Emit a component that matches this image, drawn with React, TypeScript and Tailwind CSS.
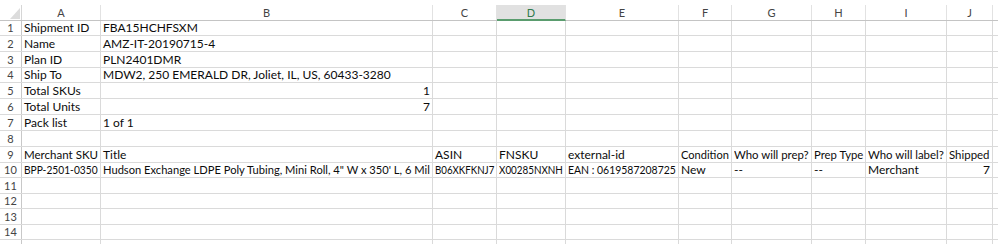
import React, { useLayoutEffect, useRef, useState } from "react";

type Cell = string | { v: string; right?: boolean };

// column widths include the 1px right grid line
const COLS = [
  { key: "A", w: 79 },
  { key: "B", w: 332 },
  { key: "C", w: 64 },
  { key: "D", w: 69 },
  { key: "E", w: 113 },
  { key: "F", w: 53 },
  { key: "G", w: 80 },
  { key: "H", w: 54 },
  { key: "I", w: 81 },
  { key: "J", w: 46 },
];

// Excel rows aren't all the same pixel height at this zoom
const ROW_H = [15, 16, 16, 15, 16, 16, 16, 16, 16, 15, 16, 15, 16, 15];

const DATA: Cell[][] = [
  ["Shipment ID", "FBA15HCHFSXM"],
  ["Name", "AMZ-IT-20190715-4"],
  ["Plan ID", "PLN2401DMR"],
  ["Ship To", "MDW2, 250 EMERALD DR, Joliet, IL, US, 60433-3280"],
  ["Total SKUs", { v: "1", right: true }],
  ["Total Units", { v: "7", right: true }],
  ["Pack list", "1 of 1"],
  [],
  [
    "Merchant SKU",
    "Title",
    "ASIN",
    "FNSKU",
    "external-id",
    "Condition",
    "Who will prep?",
    "Prep Type",
    "Who will label?",
    "Shipped",
  ],
  [
    "BPP-2501-0350",
    "Hudson Exchange LDPE Poly Tubing, Mini Roll, 4\" W x 350' L, 6 Mil",
    "B06XKFKNJ7",
    "X00285NXNH",
    "EAN : 0619587208725",
    "New",
    "--",
    "--",
    "Merchant",
    { v: "7", right: true },
  ],
];

const SELECTED_COL = "D";

// squeeze text horizontally so it never spills past the cell edge
function FitText({ text, max, right }: { text: string; max: number; right?: boolean }) {
  const ref = useRef<HTMLSpanElement>(null);
  const [scale, setScale] = useState(1);

  useLayoutEffect(() => {
    const el = ref.current;
    if (!el) return;
    const w = el.offsetWidth;
    setScale(w > max ? max / w : 1);
  }, [text, max]);

  return (
    <span
      ref={ref}
      className="inline-block"
      style={{ transform: `scaleX(${scale})`, transformOrigin: right ? "right" : "left" }}
    >
      {text}
    </span>
  );
}

function ColumnHeaders() {
  return (
    <div className="flex h-[16px] border-b border-[#c4c4c4]">
      {/* corner cell with the select-all triangle */}
      <div className="relative w-[22px] shrink-0 border-r border-[#d6d6d6]">
        <svg className="absolute left-[10px] top-[3px]" width="10" height="11" viewBox="0 0 10 11">
          <polygon points="10,0 10,11 0,11" fill="#dcdcdc" />
        </svg>
      </div>
      {COLS.map((c) => {
        const sel = c.key === SELECTED_COL;
        return (
          <div
            key={c.key}
            style={{ width: c.w }}
            className={`shrink-0 flex items-center justify-center border-r border-[#e2e2e2] text-[11px] leading-none ${
              sel
                ? "bg-[#e1e1e1] text-[#2f7a4c] border-b-2 border-b-[#5a9c6e] -mb-px"
                : "text-[#444]"
            }`}
          >
            {c.key}
          </div>
        );
      })}
      <div className="flex-1" />
    </div>
  );
}

function GridRow({ n, h, cells }: { n?: number; h: number; cells: Cell[] }) {
  return (
    <div className="flex border-b border-[#dadada]" style={{ height: h }}>
      <div className="w-[22px] shrink-0 flex items-end justify-center pb-[1px] border-r border-[#c8c8c8] text-[11px] leading-[13px] text-[#444]">
        {n}
      </div>
      {COLS.map((c, i) => {
        const cell = cells[i];
        const v = typeof cell === "string" ? cell : cell?.v ?? "";
        const right = typeof cell === "object" && cell?.right;
        return (
          <div
            key={c.key}
            style={{ width: c.w }}
            className={`shrink-0 flex items-end overflow-hidden whitespace-nowrap border-r border-[#dadada] px-[2px] pb-[1px] text-[12px] leading-[13px] text-[#0c0c0c] ${
              right ? "justify-end" : "justify-start"
            }`}
          >
            {v && <FitText text={v} max={c.w - 5} right={right} />}
          </div>
        );
      })}
      <div className="flex-1" />
    </div>
  );
}

export default function App() {
  return (
    <div
      className="w-[998px] h-[244px] overflow-hidden bg-white pt-[5px]"
      style={{ fontFamily: "Lato, 'Liberation Sans', sans-serif" }}
    >
      <ColumnHeaders />
      {ROW_H.map((h, i) => (
        <GridRow key={i} n={i + 1} h={h} cells={DATA[i] ?? []} />
      ))}
      {/* top sliver of the next row, label scrolled out of view */}
      <GridRow h={16} cells={[]} />
    </div>
  );
}
